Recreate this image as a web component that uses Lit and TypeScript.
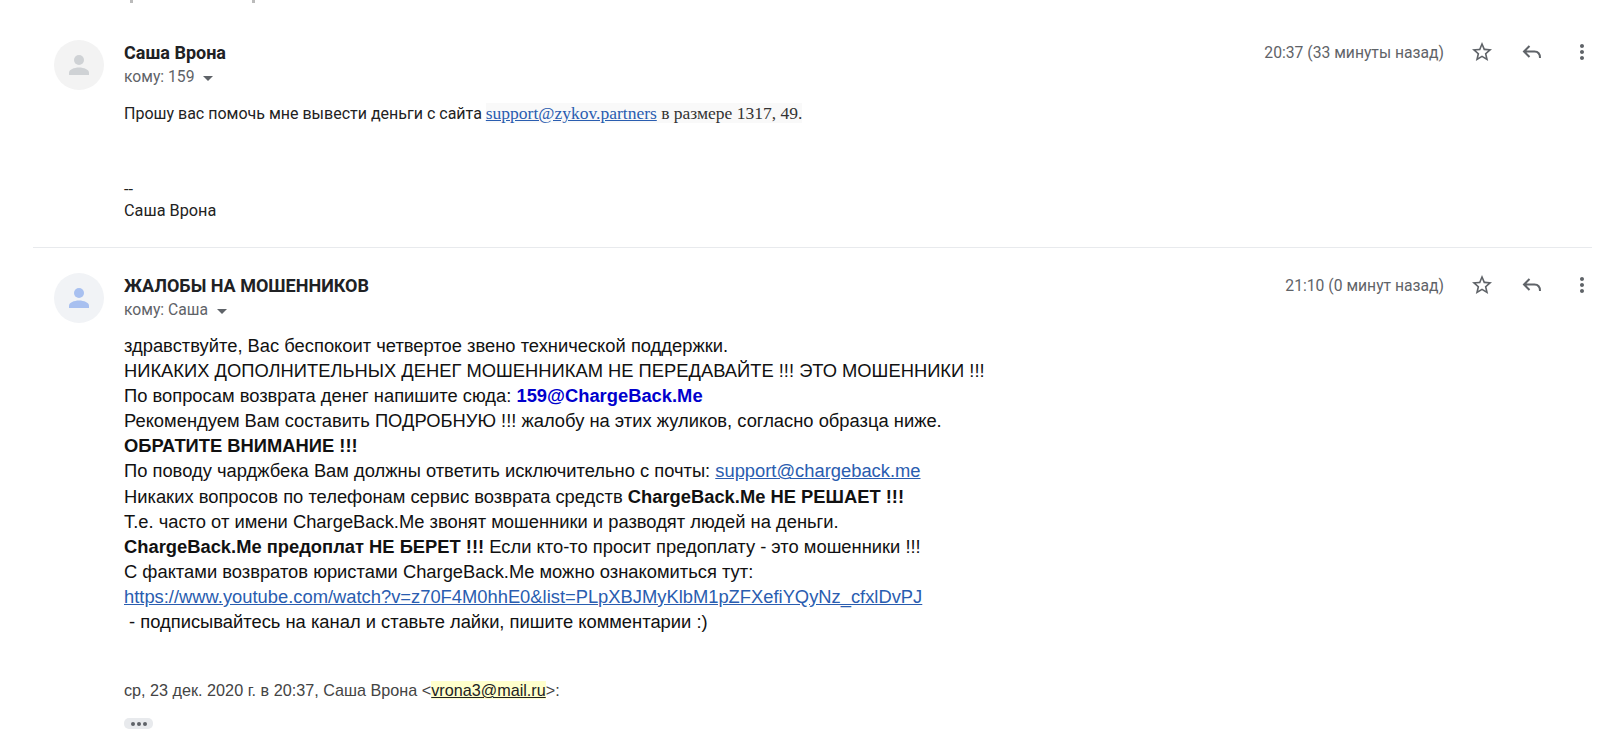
import { LitElement, css, html, svg } from "lit";
import { customElement } from "lit/decorators.js";

const star = svg`<path d="M22 9.24l-7.19-.62L12 2 9.19 8.63 2 9.24l5.46 4.73L5.82 21 12 17.27 18.18 21l-1.63-7.03L22 9.24zM12 15.4l-3.76 2.27 1-4.28-3.32-2.88 4.38-.38L12 6.1l1.71 4.04 4.38.38-3.32 2.88 1 4.28L12 15.4z"/>`;
const reply = svg`<path d="M9.500 6 4 11.500 9.500 17M4 11.500h10.500c3.500 0 5.500 2.500 5.500 6.500" fill="none" stroke="#5f6368" stroke-width="2"/>`;
const dots = svg`<path d="M12 8c1.1 0 2-.9 2-2s-.9-2-2-2-2 .9-2 2 .9 2 2 2zm0 2c-1.1 0-2 .9-2 2s.9 2 2 2 2-.9 2-2-.9-2-2-2zm0 6c-1.1 0-2 .9-2 2s.9 2 2 2 2-.9 2-2-.9-2-2-2z"/>`;
const person = svg`<circle cx="12" cy="8" r="4"/><path d="M12 14c-4 0-8 1.8-8 4v2h16v-2c0-2.200-4-4-8-4z"/>`;

@customElement("app-root")
export class AppRoot extends LitElement {
  static styles = css`
    :host {
      display: block;
      height: 735px;
      overflow: hidden;
      background: #fff;
      font-family: "Liberation Sans", Arial, sans-serif;
      color: #222;
    }
    /* bits of the line scrolled off above */
    .clipped {
      display: flex;
      gap: 119px;
      height: 4px;
      padding-left: 130px;
    }
    .clipped i {
      width: 3px;
      height: 3px;
      background: #bbb;
    }
    .page {
      padding: 36px 19px 0 33px;
    }
    .msg {
      display: flex;
      gap: 20px;
      padding-left: 21px;
    }
    .first {
      height: 207px;
      border-bottom: 1px solid #e8eaed;
      margin-bottom: 25px;
    }
    .avatar {
      width: 50px;
      height: 50px;
      flex: none;
      border-radius: 50%;
      background: #f3f3f3;
      display: flex;
      align-items: center;
      justify-content: center;
    }
    .avatar svg {
      width: 30px;
      height: 30px;
      fill: #cfd2d5;
    }
    .avatar.blue {
      background: #f1f3f6;
    }
    .avatar.blue svg {
      fill: #a8c0f0;
    }
    .main {
      flex: 1;
      min-width: 0;
    }
    .head {
      display: flex;
      justify-content: space-between;
      height: 50px;
    }
    .name {
      font-family: Roboto, sans-serif;
      font-weight: 700;
      font-size: 18px;
      line-height: 25px;
      color: #202124;
    }
    .to {
      font-family: Roboto, sans-serif;
      font-size: 15.700px;
      line-height: 24px;
      color: #5f6368;
      display: flex;
      align-items: center;
      gap: 9px;
    }
    .caret {
      width: 0;
      height: 0;
      border: 5px solid transparent;
      border-top-color: #5f6368;
      border-bottom-width: 0;
      margin-top: 2px;
    }
    .right {
      display: flex;
      align-items: flex-start;
      margin-right: -2px;
      font-family: Roboto, sans-serif;
      font-size: 15.700px;
      line-height: 25px;
      color: #5f6368;
    }
    .right svg {
      width: 24px;
      height: 24px;
      fill: #5f6368;
    }
    .icons {
      display: flex;
      gap: 26px;
      margin-left: 26px;
    }
    .body1 {
      font-family: Roboto, sans-serif;
      font-size: 16px;
      line-height: 25px;
      margin-top: 11px;
      color: #222;
    }
    .serif {
      font-family: "Liberation Serif", serif;
      font-size: 17.500px;
      color: #333;
      background: #f9f9f9;
    }
    a {
      color: #2a5db0;
      text-decoration: underline;
    }
    .sign {
      margin-top: 53px;
      line-height: 21px;
      font-size: 16.300px;
    }
    .body2 {
      font-size: 18.350px;
      line-height: 25.100px;
      margin-top: 10px;
      color: #111;
    }
    .blue-b {
      color: #0000cd;
      font-weight: 700;
    }
    .quote {
      margin-top: 47px;
      font-size: 16.200px;
      color: #444;
    }
    .mark {
      background: #ffffcc;
      color: #222;
      text-decoration: underline;
    }
    .more {
      display: flex;
      gap: 2px;
      align-items: center;
      justify-content: center;
      width: 29px;
      height: 11px;
      margin-top: 18px;
      border-radius: 5px;
      background: #e8eaed;
    }
    .more i {
      width: 4px;
      height: 4px;
      border-radius: 50%;
      background: #5f6368;
    }
  `;

  head(name: string, to: string, time: string) {
    return html`<div class="head">
      <div>
        <div class="name">${name}</div>
        <div class="to">${to}<span class="caret"></span></div>
      </div>
      <div class="right">
        ${time}
        <div class="icons">
          <svg viewBox="0 0 24 24">${star}</svg>
          <svg viewBox="0 0 24 24">${reply}</svg>
          <svg viewBox="0 0 24 24">${dots}</svg>
        </div>
      </div>
    </div>`;
  }

  render() {
    return html`<div class="clipped"><i></i><i></i></div>
      <div class="page">
      <div class="msg first">
        <div class="avatar"><svg viewBox="0 0 24 24">${person}</svg></div>
        <div class="main">
          ${this.head("Саша Врона", "кому: 159", "20:37 (33 минуты назад)")}
          <div class="body1">
            Прошу вас помочь мне вывести деньги с сайта
            <span class="serif"><a href="#">support@zykov.partners</a> в размере 1317, 49.</span>
            <div class="sign">--<br />Саша Врона</div>
          </div>
        </div>
      </div>
      <div class="msg">
        <div class="avatar blue"><svg viewBox="0 0 24 24">${person}</svg></div>
        <div class="main">
          ${this.head("ЖАЛОБЫ НА МОШЕННИКОВ", "кому: Саша", "21:10 (0 минут назад)")}
          <div class="body2">
            здравствуйте, Вас беспокоит четвертое звено технической поддержки.<br />
            НИКАКИХ ДОПОЛНИТЕЛЬНЫХ ДЕНЕГ МОШЕННИКАМ НЕ ПЕРЕДАВАЙТЕ !!! ЭТО МОШЕННИКИ !!!<br />
            По вопросам возврата денег напишите сюда: <span class="blue-b">159@ChargeBack.Me</span><br />
            Рекомендуем Вам составить ПОДРОБНУЮ !!! жалобу на этих жуликов, согласно образца ниже.<br />
            <b>ОБРАТИТЕ ВНИМАНИЕ !!!</b><br />
            По поводу чарджбека Вам должны ответить исключительно с почты: <a href="#">support@chargeback.me</a><br />
            Никаких вопросов по телефонам сервис возврата средств <b>ChargeBack.Me НЕ РЕШАЕТ !!!</b><br />
            Т.е. часто от имени ChargeBack.Me звонят мошенники и разводят людей на деньги.<br />
            <b>ChargeBack.Me предоплат НЕ БЕРЕТ !!!</b> Если кто-то просит предоплату - это мошенники !!!<br />
            С фактами возвратов юристами ChargeBack.Me можно ознакомиться тут:<br />
            <a href="#">https://www.youtube.com/watch?v=z70F4M0hhE0&list=PLpXBJMyKlbM1pZFXefiYQyNz_cfxlDvPJ</a><br />
            &nbsp;- подписывайтесь на канал и ставьте лайки, пишите комментарии :)
          </div>
          <div class="quote">ср, 23 дек. 2020 г. в 20:37, Саша Врона &lt;<span class="mark">vrona3@mail.ru</span>&gt;:</div>
          <div class="more"><i></i><i></i><i></i></div>
        </div>
      </div>
    </div>`;
  }
}
